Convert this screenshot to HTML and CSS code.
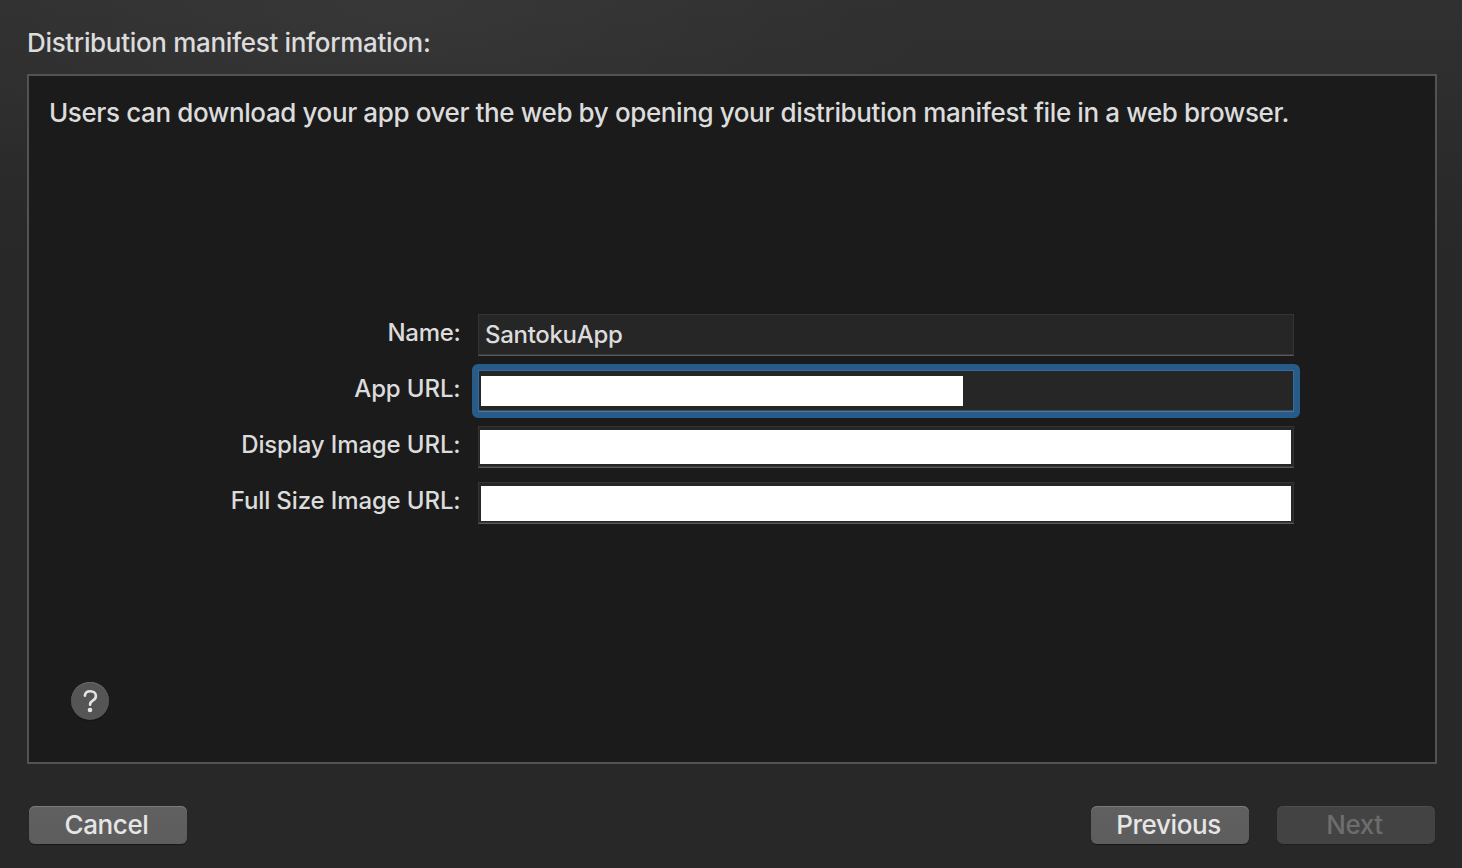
FILE: index.html
```html
<!DOCTYPE html>
<html lang="en">
<head>
<meta charset="utf-8">
<title>Distribution manifest</title>
<link rel="stylesheet" href="styles.css">
</head>
<body>
<main class="sheet">
  <h1 class="title"><span>Distribution manifest information:</span></h1>
  <section class="panel">
    <p class="intro"><span>Users can download your app over the web by opening your distribution manifest file in a web browser.</span></p>
    <div class="form">
      <div class="label name"><span>Name:</span></div>
      <div class="field"><span class="value">SantokuApp</span></div>
      <div class="label app"><span>App URL:</span></div>
      <div class="field focused"><div class="mask mask-app"></div></div>
      <div class="label display"><span>Display Image URL:</span></div>
      <div class="field"><div class="mask mask-display"></div></div>
      <div class="label full"><span>Full Size Image URL:</span></div>
      <div class="field"><div class="mask mask-full"></div></div>
    </div>
    <button class="help" aria-label="Help">
      <svg width="38" height="38" viewBox="0 0 38 38" fill="none"><path d="M13.9 13.6C14.1 10.8 16.1 9.2 19.2 9.2C22.6 9.2 24.9 11.1 24.9 13.9C24.9 16 24 17.2 22 18.4C19.9 19.7 19.1 20.6 19.1 22.2V22.8" stroke="#e4e4e4" stroke-width="2.6" stroke-linecap="round" stroke-linejoin="round"/><circle cx="19" cy="28" r="2.3" fill="#e4e4e4"/></svg>
    </button>
  </section>
  <footer class="actions">
    <button class="button cancel"><span>Cancel</span></button>
    <button class="button previous"><span>Previous</span></button>
    <button class="button next" disabled><span>Next</span></button>
  </footer>
</main>
</body>
</html>
```

FILE: styles.css
```css
* { box-sizing: border-box; }
html, body { height: 100%; }
body {
  margin: 0;
  overflow: hidden;
  font-family: Inter, "Liberation Sans", sans-serif;
  font-weight: 450;
  color: #dcdcdc;
  background: radial-gradient(ellipse 560px 240px at 400px 0, rgba(255,255,255,.035), transparent), linear-gradient(#303030 0, #2e2e2e 80px, #282828 250px, #282828 100%);
}
.sheet { display: flex; flex-direction: column; height: 868px; padding: 0 25px 24px 27px; }
.title { margin: 0; height: 74px; padding-top: 27px; font-size: 26px; line-height: 32px; font-weight: 450; letter-spacing: -0.33px; white-space: nowrap; }
.panel { display: flex; flex-direction: column; height: 690px; border: 2px solid #535353; background: #1b1b1b; }
.intro { margin: 0; padding: 21px 0 0 20px; font-size: 26px; line-height: 32px; letter-spacing: -0.39px; white-space: nowrap; }
.form { display: grid; grid-template-columns: 431.5px 816px; grid-auto-rows: 42px; column-gap: 17.5px; row-gap: 14px; margin-top: 185px; }
.label { text-align: right; font-size: 24px; line-height: 37px; letter-spacing: -0.13px; white-space: nowrap; }
.name { letter-spacing: -0.3px; }
.field { background: #262626; border: 1px solid #343434; border-bottom: 1px solid #5a5a5a; box-shadow: inset 0 -1px #3a3a3a; }
.value { display: block; padding-left: 6px; font-size: 24px; line-height: 40px; letter-spacing: -0.3px; }
.focused { position: relative; border-color: #346b9b; border-bottom-color: #3f79ab; box-shadow: inset 0 -1px #49494a; }
.focused::after { content: ""; position: absolute; inset: -7px; border: 6px solid #275c8a; border-radius: 6px; pointer-events: none; }
.mask { background: #fff; }
.mask-app { width: 482px; height: 30px; margin: 5px 0 0 2px; }
.mask-display { width: 811px; height: 34px; margin: 3px 0 0 1px; }
.mask-full { width: 810px; height: 35px; margin: 3px 0 0 2px; }
.help { width: 38px; height: 38px; margin: auto 0 42px 42px; padding: 0; border: 0; border-radius: 50%; background: #555; box-shadow: inset 0 1px #6a6a6a, 0 1px 1px rgba(0,0,0,.35); }
.help svg { display: block; }
.actions { display: flex; margin: 42px 2px 0; gap: 28px; }
.button { display: flex; justify-content: center; width: 158px; height: 38px; padding: 0 3px 0 0; border: 0; border-radius: 6px; background: linear-gradient(#606060, #5d5d5d); box-shadow: inset 0 1px #7b7b7b, 0 1px 1px rgba(0,0,0,.4); color: #e6e6e6; font-family: inherit; font-weight: 450; font-size: 26px; line-height: 38px; letter-spacing: -0.4px; }
.cancel { margin-right: auto; }
.next { background: #434343; color: #6d6d6d; box-shadow: inset 0 1px #4e4e4e, 0 1px 1px rgba(0,0,0,.2); }
```
